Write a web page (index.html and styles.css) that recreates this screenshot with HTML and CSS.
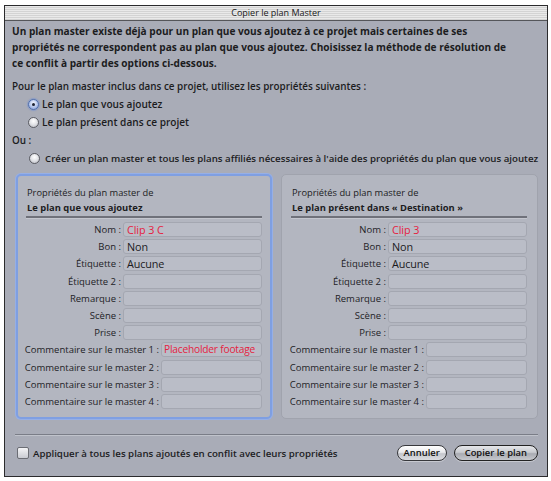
FILE: index.html
```html
<!DOCTYPE html>
<html lang="fr">
<head>
<meta charset="utf-8">
<title>Copier le plan Master</title>
<link rel="stylesheet" href="styles.css">
</head>
<body>
<div class="window">
  <div class="titlebar">Copier le plan Master</div>
  <div class="content">
    <p class="intro">Un plan master existe déjà pour un plan que vous ajoutez à ce projet mais certaines de ses<br>propriétés ne correspondent pas au plan que vous ajoutez. Choisissez la méthode de résolution de<br>ce conflit à partir des options ci-dessous.</p>
    <p class="lead">Pour le plan master inclus dans ce projet, utilisez les propriétés suivantes :</p>
    <div class="choices">
      <div class="radio-row"><span class="radio on"></span><span>Le plan que vous ajoutez</span></div>
      <div class="radio-row"><span class="radio"></span><span>Le plan présent dans ce projet</span></div>
      <p class="ou">Ou :</p>
      <div class="radio-row wide"><span class="radio"></span><span>Créer un plan master et tous les plans affiliés nécessaires à l'aide des propriétés du plan que vous ajoutez</span></div>
    </div>

    <div class="panels">
      <section class="panel focused">
        <div class="panel-sub">Propriétés du plan master de</div>
        <div class="panel-title">Le plan que vous ajoutez</div>
        <div class="rule"></div>
        <div class="rows">
          <div class="row short"><span class="lbl">Nom :</span><span class="fld red">Clip 3 C</span></div>
          <div class="row short"><span class="lbl">Bon :</span><span class="fld">Non</span></div>
          <div class="row short"><span class="lbl">Étiquette :</span><span class="fld">Aucune</span></div>
          <div class="row short"><span class="lbl">Étiquette 2 :</span><span class="fld"></span></div>
          <div class="row short"><span class="lbl">Remarque :</span><span class="fld"></span></div>
          <div class="row short"><span class="lbl">Scène :</span><span class="fld"></span></div>
          <div class="row short"><span class="lbl">Prise :</span><span class="fld"></span></div>
          <div class="row long"><span class="lbl">Commentaire sur le master 1 :</span><span class="fld red tight">Placeholder footage</span></div>
          <div class="row long"><span class="lbl">Commentaire sur le master 2 :</span><span class="fld"></span></div>
          <div class="row long"><span class="lbl">Commentaire sur le master 3 :</span><span class="fld"></span></div>
          <div class="row long"><span class="lbl">Commentaire sur le master 4 :</span><span class="fld"></span></div>
        </div>
      </section>
      <section class="panel">
        <div class="panel-sub">Propriétés du plan master de</div>
        <div class="panel-title">Le plan présent dans « Destination »</div>
        <div class="rule"></div>
        <div class="rows">
          <div class="row short"><span class="lbl">Nom :</span><span class="fld red">Clip 3</span></div>
          <div class="row short"><span class="lbl">Bon :</span><span class="fld">Non</span></div>
          <div class="row short"><span class="lbl">Étiquette :</span><span class="fld">Aucune</span></div>
          <div class="row short"><span class="lbl">Étiquette 2 :</span><span class="fld"></span></div>
          <div class="row short"><span class="lbl">Remarque :</span><span class="fld"></span></div>
          <div class="row short"><span class="lbl">Scène :</span><span class="fld"></span></div>
          <div class="row short"><span class="lbl">Prise :</span><span class="fld"></span></div>
          <div class="row long"><span class="lbl">Commentaire sur le master 1 :</span><span class="fld"></span></div>
          <div class="row long"><span class="lbl">Commentaire sur le master 2 :</span><span class="fld"></span></div>
          <div class="row long"><span class="lbl">Commentaire sur le master 3 :</span><span class="fld"></span></div>
          <div class="row long"><span class="lbl">Commentaire sur le master 4 :</span><span class="fld"></span></div>
        </div>
      </section>
    </div>

    <div class="bottom-rule"></div>
    <div class="footer">
      <label class="check-row"><span class="checkbox"></span><span>Appliquer à tous les plans ajoutés en conflit avec leurs propriétés</span></label>
      <div class="buttons">
        <button class="btn">Annuler</button>
        <button class="btn default">Copier le plan</button>
      </div>
    </div>
  </div>
</div>
</body>
</html>
```

FILE: styles.css
```css
* { box-sizing: border-box; }
html, body { margin: 0; padding: 0; background: #ffffff; }
body {
  font-family: "Open Sans", "Noto Sans", "DejaVu Sans", sans-serif;
  color: #1c1c1e;
  width: 551px;
  height: 481px;
  overflow: hidden;
}
.window {
  margin: 5px 0 0 4px;
  width: 544px;
  height: 472px;
  border: 1px solid #2b2b2d;
  background: #a9acb7;
  display: flex;
  flex-direction: column;
}
.titlebar {
  height: 15px;
  flex: none;
  background: repeating-linear-gradient(to bottom, #e9e9e9 0, #e9e9e9 1px, #d3d3d3 1px, #d3d3d3 2px);
  border-bottom: 1px solid #55565a;
  font-size: 9px;
  line-height: 14px;
  text-align: center;
  color: #1a1a1a;
}
.content {
  flex: 1;
  padding: 0 9px 0 7px;
  display: flex;
  flex-direction: column;
}
p { margin: 0; }
.intro {
  font-weight: 700;
  font-size: 10.1px;
  line-height: 16px;
  padding-top: 2px;
}
.lead {
  font-weight: 600;
  font-size: 9.9px;
  line-height: 14px;
  margin-top: 8px;
}
.choices {
  margin-top: 2px;
}
.radio-row {
  display: flex;
  align-items: center;
  gap: 3px;
  height: 18px;
  padding-left: 16px;
  font-weight: 600;
  font-size: 10.1px;
  white-space: nowrap;
}
.radio-row.wide {
  gap: 5px;
  padding-left: 17px;
  font-size: 9.7px;
}
.radio {
  width: 11px;
  height: 11px;
  border-radius: 50%;
  border: 1px solid #5b5c63;
  background: radial-gradient(circle at 50% 35%, #ffffff 0, #e4e5e9 45%, #b5b7bf 100%);
  flex: none;
  position: relative;
}
.radio.on {
  border-color: #4f6fae;
  background: radial-gradient(circle at 50% 35%, #f4f7ff 0, #b9c9ec 50%, #7e98d3 100%);
  box-shadow: 0 0 1px 1px rgba(110, 140, 210, 0.55);
}
.radio.on::after {
  content: "";
  position: absolute;
  left: 3px;
  top: 3px;
  width: 3px;
  height: 3px;
  border-radius: 50%;
  background: #1d2333;
}
.ou {
  font-weight: 600;
  font-size: 9.9px;
  line-height: 17px;
  padding-left: 0;
  padding-top: 1px;
}
.panels {
  display: grid;
  grid-template-columns: 256px 257px;
  gap: 9px;
  padding-left: 4px;
  margin-top: 7px;
  height: 245px;
}
.panel {
  background: #b3b6c0;
  border: 1px solid #a0a3ad;
  border-radius: 5px;
  padding: 11px 10px 0 7px;
}
.panel.focused {
  border: 2px solid #7f9fe2;
  box-shadow: 0 0 0 1px #96afe6;
  padding: 10px 8px 0 6px;
}
.panel-sub {
  font-size: 9.3px;
  line-height: 14px;
  padding-left: 3px;
}
.panel-title {
  font-size: 9.4px;
  font-weight: 700;
  line-height: 15px;
  padding-left: 3px;
}
.rule {
  margin: 1px 0 3px 2px;
  background: #6f717a;
  border-bottom: 1px solid #c4c6ce;
  height: 3px;
}
.rows {
  display: flex;
  flex-direction: column;
  gap: 2.2px;
}
.row {
  display: flex;
  align-items: center;
  height: 15px;
}
.lbl {
  font-size: 9.5px;
  text-align: right;
  white-space: nowrap;
  flex: none;
  padding-right: 2px;
  color: #222226;
}
.row.short .lbl { width: 99px; }
.row.long .lbl { width: 137px; }
.fld {
  flex: 1;
  height: 15px;
  background: #babdc7;
  border: 1px solid #a4a7b1;
  border-radius: 3px;
  font-size: 10.8px;
  letter-spacing: -0.1px;
  line-height: 13px;
  padding-left: 3px;
  color: #1a1a1d;
  white-space: nowrap;
  overflow: hidden;
}
.fld.tight {
  font-size: 10.2px;
  letter-spacing: -0.2px;
  padding-left: 2px;
}
.fld.red { color: #e5223f; }
.bottom-rule {
  margin: 15px 0 0 3px;
  height: 2px;
  background: #7a7d87;
  border-bottom: 1px solid #c0c3cb;
}
.footer {
  display: flex;
  align-items: center;
  justify-content: space-between;
  margin-top: 8px;
  height: 18px;
}
.check-row {
  display: flex;
  align-items: center;
  gap: 4px;
  font-size: 9.7px;
  font-weight: 600;
  padding-left: 5px;
}
.checkbox {
  width: 12px;
  height: 12px;
  border: 1px solid #6b6d74;
  border-radius: 2px;
  background: linear-gradient(#f4f4f6, #c9cbd2);
  flex: none;
}
.buttons {
  display: flex;
  gap: 7px;
}
.btn {
  font-family: inherit;
  font-size: 9.4px;
  font-weight: 600;
  height: 16px;
  padding: 0 6px;
  border-radius: 8px;
  border: 1px solid #37383c;
  background: linear-gradient(#ffffff 0, #e9e9ec 45%, #c4c6cc 55%, #dcdde1 100%);
  color: #111;
  line-height: 14px;
  box-shadow: 0 1px 0 rgba(255,255,255,0.35);
}
.btn.default {
  border: 1.5px solid #222;
  background: linear-gradient(#e6e7ea 0, #c8cacf 45%, #a9abb2 55%, #c5c7cc 100%);
  padding: 0 10px;
}
```
